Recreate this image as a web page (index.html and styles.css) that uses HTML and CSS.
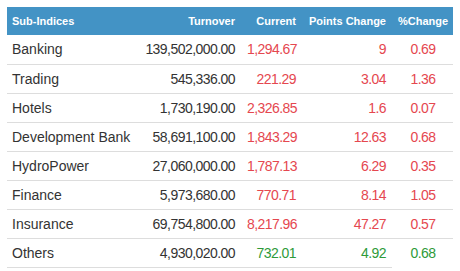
FILE: index.html
```html
<!DOCTYPE html>
<html>
<head>
<meta charset="utf-8">
<link rel="stylesheet" href="styles.css">
</head>
<body>
<table class="idx">
  <colgroup>
    <col class="c1"><col class="c2"><col class="c3"><col class="c4"><col class="c5">
  </colgroup>
  <thead>
    <tr>
      <th class="l">Sub-Indices</th>
      <th class="r">Turnover</th>
      <th class="r">Current</th>
      <th class="r">Points Change</th>
      <th class="c">%Change</th>
    </tr>
  </thead>
  <tbody>
    <tr><td class="l">Banking</td><td class="r num">139,502,000.00</td><td class="r num red">1,294.67</td><td class="r num red">9</td><td class="c num red">0.69</td></tr>
    <tr><td class="l">Trading</td><td class="r num">545,336.00</td><td class="r num red">221.29</td><td class="r num red">3.04</td><td class="c num red">1.36</td></tr>
    <tr><td class="l">Hotels</td><td class="r num">1,730,190.00</td><td class="r num red">2,326.85</td><td class="r num red">1.6</td><td class="c num red">0.07</td></tr>
    <tr><td class="l">Development Bank</td><td class="r num">58,691,100.00</td><td class="r num red">1,843.29</td><td class="r num red">12.63</td><td class="c num red">0.68</td></tr>
    <tr><td class="l">HydroPower</td><td class="r num">27,060,000.00</td><td class="r num red">1,787.13</td><td class="r num red">6.29</td><td class="c num red">0.35</td></tr>
    <tr><td class="l">Finance</td><td class="r num">5,973,680.00</td><td class="r num red">770.71</td><td class="r num red">8.14</td><td class="c num red">1.05</td></tr>
    <tr><td class="l">Insurance</td><td class="r num">69,754,800.00</td><td class="r num red">8,217.96</td><td class="r num red">47.27</td><td class="c num red">0.57</td></tr>
    <tr><td class="l">Others</td><td class="r num">4,930,020.00</td><td class="r num green">732.01</td><td class="r num green">4.92</td><td class="c num green nob">0.68</td></tr>
  </tbody>
</table>
</body>
</html>
```
FILE: styles.css
```css
html, body {
  background: #ffffff;
}
body {
  margin: 7px;
  font-family: "Liberation Sans", Arial, sans-serif;
  color: #333333;
}
.idx {
  border-collapse: collapse;
  table-layout: fixed;
  width: 447px;
}
.c1 { width: 120px; }
.c2 { width: 114px; }
.c3 { width: 61px; }
.c4 { width: 90px; }
.c5 { width: 62px; }
.idx th {
  background: #4393c5;
  color: #ffffff;
  font-size: 11px;
  font-weight: bold;
  height: 28px;
  padding: 0 6px;
  box-sizing: border-box;
}
.idx td {
  font-size: 14px;
  height: 29px;
  padding: 0 6px;
  box-sizing: border-box;
  border-bottom: 1px solid #dddddd;
  white-space: nowrap;
}
.idx th.l, .idx td.l { text-align: left; padding-left: 5px; }
.idx .r { text-align: right; }
.idx .c { text-align: center; }
.idx td.num { letter-spacing: -0.55px; }
.idx td.red { color: #e5474f; }
.idx td.green { color: #2e9a3a; }
.idx td.nob { border-bottom: none; }
```
